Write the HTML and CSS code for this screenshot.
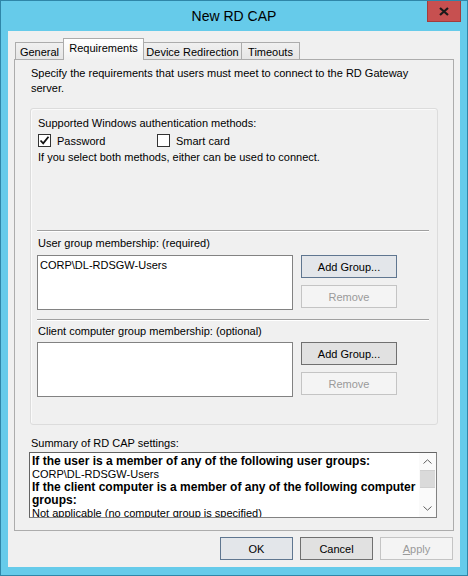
FILE: index.html
```html
<!DOCTYPE html>
<html lang="en">

<head>
    <meta charset="UTF-8">
    <title>New RD CAP</title>
    <link rel="stylesheet" href="styles.css">
</head>

<body>

    <div class="window">
        <div class="titlebar">
            <span class="title">New RD CAP</span>
            <span class="close">
                <svg width="10" height="9" viewBox="0 0 10 9">
                    <path d="M1 1 L9 8 M9 1 L1 8" stroke="#1a1a1a" stroke-width="2.2" fill="none"/>
                </svg>
            </span>
        </div>

        <div class="client">
            <div class="tabs">
                <div class="tab tab-general">General</div>
                <div class="tab tab-req active">Requirements</div>
                <div class="tab tab-device">Device Redirection</div>
                <div class="tab tab-timeouts">Timeouts</div>
            </div>

            <div class="panel">
                <p class="intro">Specify the requirements that users must meet to connect to the RD Gateway<br>server.</p>

                <div class="groupbox">
                    <div class="label">Supported Windows authentication methods:</div>
                    <div class="checks">
                        <div class="check check-password">
                            <span class="checkbox">
                                <svg width="11" height="11" viewBox="0 0 11 11">
                                    <path d="M1.5 5.5 L4.2 8.3 L9.5 1.8" stroke="#111" stroke-width="1.8" fill="none"/>
                                </svg>
                            </span>
                            Password
                        </div>
                        <div class="check">
                            <span class="checkbox"></span>
                            Smart card
                        </div>
                    </div>
                    <div class="hint">If you select both methods, either can be used to connect.</div>

                    <div class="sep sep-first"></div>
                    <div class="label label-group">User group membership: (required)</div>
                    <div class="member-row">
                        <div class="listbox">
                            <div class="list-item">CORP\DL-RDSGW-Users</div>
                        </div>
                        <div class="side-buttons">
                            <button type="button" class="btn btn-focus">Add Group...</button>
                            <button type="button" class="btn btn-disabled">Remove</button>
                        </div>
                    </div>

                    <div class="sep sep-second"></div>
                    <div class="label label-client">Client computer group membership: (optional)</div>
                    <div class="member-row">
                        <div class="listbox"></div>
                        <div class="side-buttons">
                            <button type="button" class="btn">Add Group...</button>
                            <button type="button" class="btn btn-disabled">Remove</button>
                        </div>
                    </div>
                </div>

                <div class="summary-label">Summary of RD CAP settings:</div>
                <div class="summary">
                    <div class="summary-text">
                        <div class="strong">If the user is a member of any of the following user groups:</div>
                        <div>CORP\DL-RDSGW-Users</div>
                        <div class="strong">If the client computer is a member of any of the following computer<br>groups:</div>
                        <div>Not applicable (no computer group is specified)</div>
                    </div>
                    <div class="scrollbar">
                        <div class="arrow">
                            <svg width="9" height="5" viewBox="0 0 9 5"><path d="M0.5 4.5 L4.5 0.8 L8.5 4.5" stroke="#606060" fill="none"/></svg>
                        </div>
                        <div class="thumb"></div>
                        <div class="track"></div>
                        <div class="arrow">
                            <svg width="9" height="5" viewBox="0 0 9 5"><path d="M0.5 0.5 L4.5 4.2 L8.5 0.5" stroke="#606060" fill="none"/></svg>
                        </div>
                    </div>
                </div>
            </div>

            <div class="footer">
                <button type="button" class="btn btn-footer btn-default">OK</button>
                <button type="button" class="btn btn-footer">Cancel</button>
                <button type="button" class="btn btn-footer btn-disabled"><u>A</u>pply</button>
            </div>
        </div>
    </div>

</body>

</html>
```

FILE: styles.css
```css
body {
    margin: 0;
    padding: 0;
    font-family: "Liberation Sans", Arial, sans-serif;
    font-size: 11px;
    color: #000;
}

.window {
    width: 468px;
    height: 576px;
    box-sizing: border-box;
    border: 1px solid #2f86a8;
    background-color: #66cbea;
    display: flex;
    flex-direction: column;
}

.titlebar {
    height: 30px;
    position: relative;
    display: flex;
    align-items: center;
    justify-content: center;
}

.title {
    font-size: 14px;
    color: #000;
}

.close {
    position: absolute;
    top: 0;
    right: 6px;
    width: 32px;
    height: 20px;
    background-color: #c75050;
    border: 1px solid #a23c3c;
    border-top: none;
    display: flex;
    align-items: center;
    justify-content: center;
}

.client {
    flex: 1;
    margin: 0 7px 8px 7px;
    background-color: #f0f0f0;
    padding: 7px 6px 0 6px;
    display: flex;
    flex-direction: column;
}

/* tabs */

.tabs {
    display: flex;
    align-items: flex-end;
    padding-left: 1px;
    margin-bottom: -1px;
    position: relative;
    z-index: 1;
}

.tab {
    box-sizing: border-box;
    height: 18px;
    border: 1px solid #acacac;
    margin-left: -1px;
    background: linear-gradient(#f0f0f0, #e6e6e6);
    display: flex;
    justify-content: center;
    align-items: center;
    padding-top: 1px;
    white-space: nowrap;
}

.tab:first-child {
    margin-left: 0;
}

.tab.active {
    height: 22px;
    border-bottom: none;
    background: linear-gradient(#ffffff, #f6f6f6 70%, #f0f0f0);
    align-items: flex-start;
    padding-top: 3px;
}

.tab-general { width: 49px; }
.tab-req { width: 81px; }
.tab-device { width: 99px; }
.tab-timeouts { width: 59px; }

.panel {
    box-sizing: border-box;
    height: 472px;
    border: 1px solid #acacac;
    padding: 6px 15px 0 15px;
}

.intro {
    margin: 0;
    padding-left: 1px;
    line-height: 15px;
}

/* group box */

.groupbox {
    margin-top: 12px;
    box-sizing: border-box;
    height: 317px;
    border: 1px solid #dcdcdc;
    border-radius: 3px;
    box-shadow: inset 1px 1px 0 #fafafa;
    padding: 7px 8px 0 6px;
}

.label {
    line-height: 15px;
    padding-left: 1px;
}

.checks {
    display: flex;
    margin-top: 2px;
    height: 15px;
    align-items: center;
}

.check {
    display: flex;
    align-items: center;
    gap: 6px;
    padding-left: 1px;
}

.check-password {
    width: 118px;
}

.checkbox {
    box-sizing: border-box;
    width: 13px;
    height: 13px;
    border: 1px solid #333;
    background-color: #fff;
    display: flex;
    align-items: center;
    justify-content: center;
}

.hint {
    margin-top: 2px;
    line-height: 15px;
    padding-left: 1px;
}

.sep {
    height: 1px;
    background-color: #a0a0a0;
    border-bottom: 1px solid #fff;
}

.sep-first {
    margin-top: 65px;
}

.sep-second {
    margin-top: 9px;
}

.label-group {
    margin-top: 4px;
}

.label-client {
    margin-top: 3px;
}

.member-row {
    display: flex;
    gap: 8px;
    margin-top: 4px;
}

.label-client + .member-row {
    margin-top: 3px;
}

.listbox {
    box-sizing: border-box;
    width: 256px;
    height: 55px;
    border: 1px solid #828282;
    background-color: #fff;
    padding: 2px 2px;
}

.list-item {
    line-height: 15px;
}

.side-buttons {
    display: flex;
    flex-direction: column;
    gap: 7px;
}

/* buttons */

.btn {
    box-sizing: border-box;
    width: 96px;
    height: 23px;
    font-family: inherit;
    font-size: 11px;
    color: #000;
    background-color: #e1e1e1;
    border: 1px solid #707070;
    padding: 0;
    margin: 0;
}

.btn-focus {
    background-color: #e3e6ea;
    border-color: #5f7690;
}

.btn-disabled {
    background-color: #f4f4f4;
    border-color: #c4c4c4;
    color: #9a9a9a;
}

/* summary */

.summary-label {
    margin-top: 11px;
    line-height: 15px;
    padding-left: 1px;
}

.summary {
    margin: 1px 1px 0 -1px;
    box-sizing: border-box;
    height: 66px;
    border: 1px solid #828282;
    border-top-color: #646464;
    border-left-color: #646464;
    background-color: #fff;
    display: flex;
    overflow: hidden;
}

.summary-text {
    flex: 1;
    padding: 2px 0 0 2px;
    line-height: 13px;
    white-space: nowrap;
    overflow: hidden;
}

.strong {
    font-weight: bold;
    font-size: 12px;
}

.scrollbar {
    width: 17px;
    display: flex;
    flex-direction: column;
    background-color: #fafafa;
}

.arrow {
    height: 17px;
    display: flex;
    align-items: center;
    justify-content: center;
}

.thumb {
    height: 16px;
    background-color: #dadada;
    border: 1px solid #cfcfcf;
    border-left: none;
    border-right: none;
    margin: 0 1px;
}

.track {
    flex: 1;
}

/* footer */

.footer {
    display: flex;
    justify-content: flex-end;
    gap: 7px;
    margin-top: 6px;
    padding-right: 1px;
}

.btn-footer {
    width: 73px;
}

.btn-default {
    border-color: #5f7690;
    background-color: #e3e6ea;
}
```
